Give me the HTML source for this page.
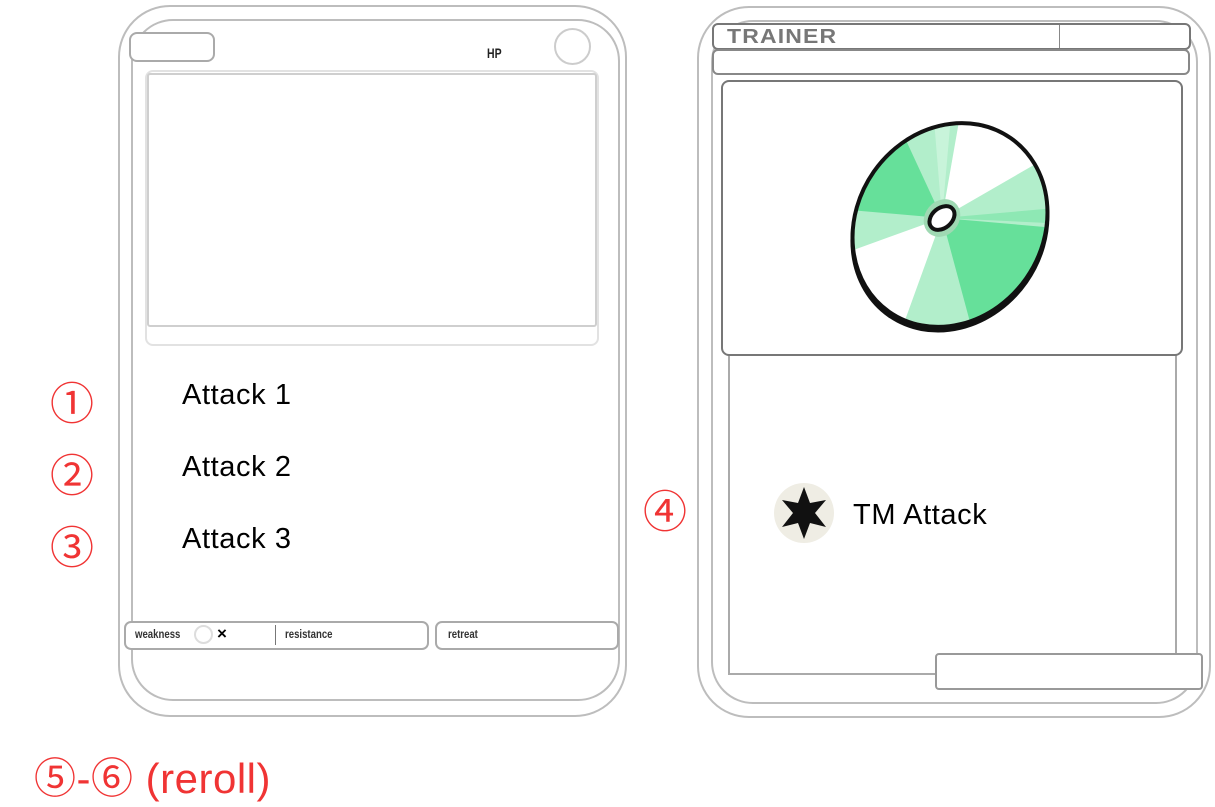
<!DOCTYPE html>
<html><head><meta charset="utf-8"><style>
*{margin:0;padding:0;box-sizing:border-box}
body{width:1215px;height:807px;background:#fff;position:relative;overflow:hidden;font-family:"Liberation Sans","Noto Sans CJK JP",sans-serif}
.a{position:absolute}
.b{position:absolute;border:2px solid #bdbdbd}
.red{position:absolute;color:#f03434;font-family:"Liberation Sans","Noto Sans CJK JP",sans-serif;line-height:1}
.atk{position:absolute;font-size:29px;color:#000;line-height:1;letter-spacing:0.6px}
.sm{position:absolute;font-size:12px;font-weight:bold;color:#333;transform:scaleX(0.8);transform-origin:left;line-height:1}
</style></head><body>
<!-- left card -->
<div class="b" style="left:118px;top:5px;width:509px;height:712px;border-radius:52px"></div>
<div class="b" style="left:131px;top:19px;width:489px;height:682px;border-radius:42px"></div>
<div class="b" style="left:129px;top:32px;width:86px;height:30px;border-radius:8px;background:#fff;border-color:#aaa"></div>
<div class="a" style="left:487px;top:45px;font-size:14px;font-weight:bold;transform:scaleX(0.75);transform-origin:left;color:#222">HP</div>
<div class="b" style="left:554px;top:28px;width:37px;height:37px;border-radius:50%;border-color:#ccc"></div>
<div class="b" style="left:145px;top:70px;width:454px;height:276px;border-radius:8px;border-color:#e2e2e2"></div>
<div class="b" style="left:147px;top:73px;width:450px;height:254px;border-color:#cfcfcf;border-radius:3px"></div>
<div class="atk" style="left:182px;top:381px">Attack 1</div>
<div class="atk" style="left:182px;top:453px">Attack 2</div>
<div class="atk" style="left:182px;top:525px">Attack 3</div>
<div class="red" style="left:50px;top:383px;font-size:44px">①</div>
<div class="red" style="left:50px;top:455px;font-size:44px">②</div>
<div class="red" style="left:50px;top:527px;font-size:44px">③</div>
<div class="b" style="left:124px;top:621px;width:305px;height:29px;border-radius:7px;border-color:#aaa;background:#fff"></div>
<div class="b" style="left:435px;top:621px;width:184px;height:29px;border-radius:7px;border-color:#aaa;background:#fff"></div>
<div class="sm" style="left:135px;top:628px">weakness</div>
<div class="b" style="left:194px;top:625px;width:19px;height:19px;border-radius:50%;border-color:#ddd"></div>
<div class="a" style="left:217px;top:624px;font-size:17px;font-weight:bold">×</div>
<div class="a" style="left:275px;top:625px;width:1px;height:20px;background:#777"></div>
<div class="sm" style="left:285px;top:628px">resistance</div>
<div class="sm" style="left:448px;top:628px">retreat</div>
<div class="red" style="left:34px;top:758px;font-size:42px;letter-spacing:0.5px;white-space:nowrap">⑤-⑥ (reroll)</div>

<!-- right card -->
<div class="b" style="left:697px;top:6px;width:514px;height:712px;border-radius:52px"></div>
<div class="b" style="left:711px;top:20px;width:487px;height:684px;border-radius:42px"></div>
<div class="b" style="left:712px;top:23px;width:479px;height:27px;border-radius:6px;border-color:#777;background:#fff"></div>
<div class="a" style="left:1059px;top:25px;width:1px;height:23px;background:#888"></div>
<div class="a" style="left:727px;top:27px;font-size:20px;font-weight:bold;color:#777;letter-spacing:1px;line-height:1;transform:scaleX(1.15);transform-origin:left">TRAINER</div>
<div class="b" style="left:712px;top:49px;width:478px;height:26px;border-radius:6px;border-color:#888;background:#fff"></div>
<div class="b" style="left:728px;top:350px;width:449px;height:325px;border-color:#aaa"></div>
<div class="b" style="left:721px;top:80px;width:462px;height:276px;border-radius:8px;border-color:#777;background:#fff"></div>
<svg class="a" style="left:840px;top:110px" width="220" height="230" viewBox="840 110 220 230">
 <defs><clipPath id="c"><ellipse cx="950" cy="225" rx="93" ry="106" transform="rotate(35 950 225)"/></clipPath></defs>
 <ellipse cx="952" cy="228" rx="93" ry="106" transform="rotate(35 950 225)" fill="#7fbf95" stroke="#111" stroke-width="4"/>
 <g clip-path="url(#c)">
  <rect x="840" y="110" width="220" height="230" fill="#b2eecb"/>
  <path d="M942 218 L793 205 L879 82 Z" fill="#66e09a"/>
  <path d="M942 218 L968 70 L1072 143 Z" fill="#fff"/>
  <path d="M942 218 L1091 231 L981 363 Z" fill="#66e09a"/>
  <path d="M942 218 L891 359 L801 269 Z" fill="#fff"/>
  <path d="M942 218 L930 70 L955 70 Z" fill="#c8f4da"/>
  <path d="M942 218 L1091 205 L1091 225 Z" fill="#8ee8b4"/>
 </g>
 <ellipse cx="950" cy="225" rx="93" ry="106" transform="rotate(35 950 225)" fill="none" stroke="#111" stroke-width="4"/>
 <ellipse cx="942" cy="218" rx="17" ry="20" transform="rotate(40 942 218)" fill="#9fd9b3"/>
 <ellipse cx="942" cy="218" rx="10" ry="14" transform="rotate(50 942 218)" fill="#fff" stroke="#111" stroke-width="4"/>
</svg>
<div class="a" style="left:774px;top:483px;width:60px;height:60px;border-radius:50%;background:#efede4"></div>
<svg class="a" style="left:774px;top:483px" width="60" height="60" viewBox="0 0 60 60">
 <path d="M30 4 L36 20 L52 17 L41 30 L52 44 L36 40 L30 56 L24 40 L8 44 L19 30 L8 17 L24 20 Z" fill="#111"/>
</svg>
<div class="atk" style="left:853px;top:501px">TM Attack</div>
<div class="red" style="left:643px;top:491px;font-size:44px">④</div>
<div class="b" style="left:935px;top:653px;width:268px;height:37px;border-radius:4px;border-color:#999;background:#fff"></div>
</body></html>
